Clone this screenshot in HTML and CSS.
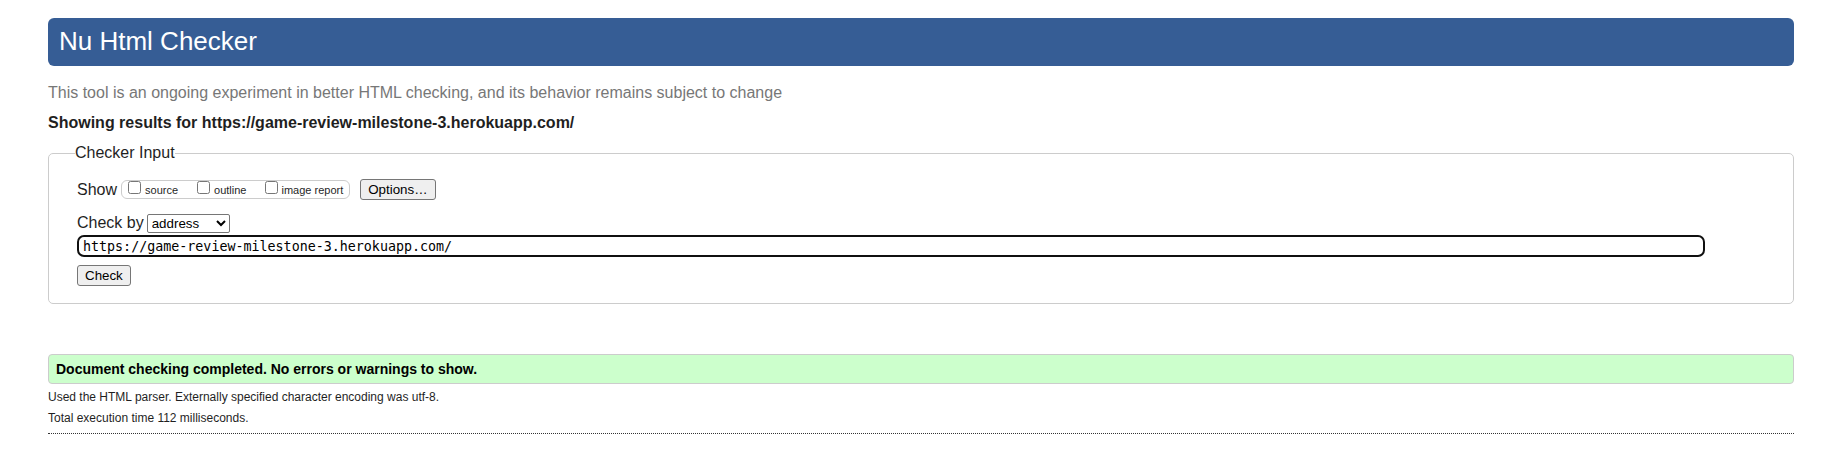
FILE: index.html
```html
<!DOCTYPE html>
<html lang="en">
<head>
<meta charset="utf-8">
<title>Nu Html Checker</title>
<link rel="stylesheet" href="styles.css">
</head>
<body>
<h1 class="banner">Nu Html Checker</h1>
<p class="tagline">This tool is an ongoing experiment in better HTML checking, and its behavior remains subject to change</p>
<h2 class="subject">Showing results for https://game-review-milestone-3.herokuapp.com/</h2>
<form>
  <fieldset class="checker">
    <legend>Checker Input</legend>
    <div class="row show-row">
      <span>Show</span>
      <div class="options">
        <label><input type="checkbox" name="showsource"> source</label>
        <label><input type="checkbox" name="showoutline"> outline</label>
        <label class="image-report"><input type="checkbox" name="showimagereport"> image report</label>
      </div>
      <button class="button options-button" type="button">Options…</button>
    </div>
    <div class="row">
      <label for="docselect">Check by</label>
      <select id="docselect" class="method">
        <option>address</option>
        <option>file upload</option>
        <option>text input</option>
      </select>
    </div>
    <input class="address" type="url" name="doc" aria-label="Address" value="https://game-review-milestone-3.herokuapp.com/">
    <button class="button" type="submit">Check</button>
  </fieldset>
</form>
<div class="results">
  <p class="success">Document checking completed. No errors or warnings to show.</p>
  <p class="details">Used the HTML parser. Externally specified character encoding was utf-8.</p>
  <p class="details">Total execution time 112 milliseconds.</p>
</div>
<hr class="divider">
</body>
</html>
```

FILE: styles.css
```css
* {
  box-sizing: border-box;
}

body {
  margin: 18px 28px 0 48px;
  background: #fff;
  color: #1f1f1f;
  font: 16px/20px "Liberation Sans", Arial, sans-serif;
}

h1, h2, p {
  margin: 0;
}

.banner {
  padding: 8px 11px 10px;
  border-radius: 6px;
  background: #365d95;
  color: #fff;
  font-size: 26px;
  font-weight: normal;
  line-height: 30px;
}

.tagline {
  margin-top: 17px;
  color: #777;
}

.subject {
  margin-top: 10px;
  font-size: 16px;
}

.checker {
  margin: 10px 0 0;
  padding: 16px 88px 17px 28px;
  border: 1px solid #ccc;
  border-radius: 5px;
  min-width: 0;
}

.checker legend {
  margin-left: -2px;
  padding: 0;
}

.row {
  display: flex;
  align-items: center;
  gap: 3px;
}

.show-row {
  gap: 4px;
  margin-bottom: 13px;
}

.options {
  display: flex;
  align-items: flex-start;
  gap: 19px;
  height: 19px;
  padding: 0 6px;
  border: 1px solid #ccc;
  border-radius: 6px;
  font-size: 11px;
}

.options label {
  display: flex;
  gap: 4px;
  line-height: 19px;
}

.options .image-report {
  gap: 3px;
}

.options input {
  width: 13px;
  height: 13px;
  margin: 0;
}

.button {
  display: block;
  height: 21px;
  padding: 1px 7px;
  border: 1px solid #767676;
  border-radius: 3px;
  background: #efefef;
  color: #000;
  font-family: "Liberation Sans", Arial, sans-serif;
  line-height: 17px;
}

.options-button {
  margin-left: 6px;
}

.method {
  width: 83px;
  height: 19px;
  border: 1px solid #767676;
  border-radius: 2px;
  background-color: #fff;
  color: #000;
  font-family: "Liberation Sans", Arial, sans-serif;
}

.address {
  display: block;
  width: 100%;
  height: 22px;
  margin: 2px 0 8px;
  padding: 0 4px;
  border: 2px solid #101010;
  border-radius: 7px;
  outline: none;
  background: #fff;
  color: #000;
  font-family: "DejaVu Sans Mono", monospace;
}

.results {
  margin-top: 50px;
}

.success {
  margin-bottom: 3px;
  padding: 4px 7px;
  border: 1px solid #ccc;
  border-radius: 4px;
  background: #cfc;
  color: #000;
  font-size: 14px;
  font-weight: bold;
}

.details {
  font-size: 12px;
  line-height: 21px;
}

.divider {
  margin: 4px 0 0;
  border: 0;
  border-top: 1px dotted #333;
}
```
